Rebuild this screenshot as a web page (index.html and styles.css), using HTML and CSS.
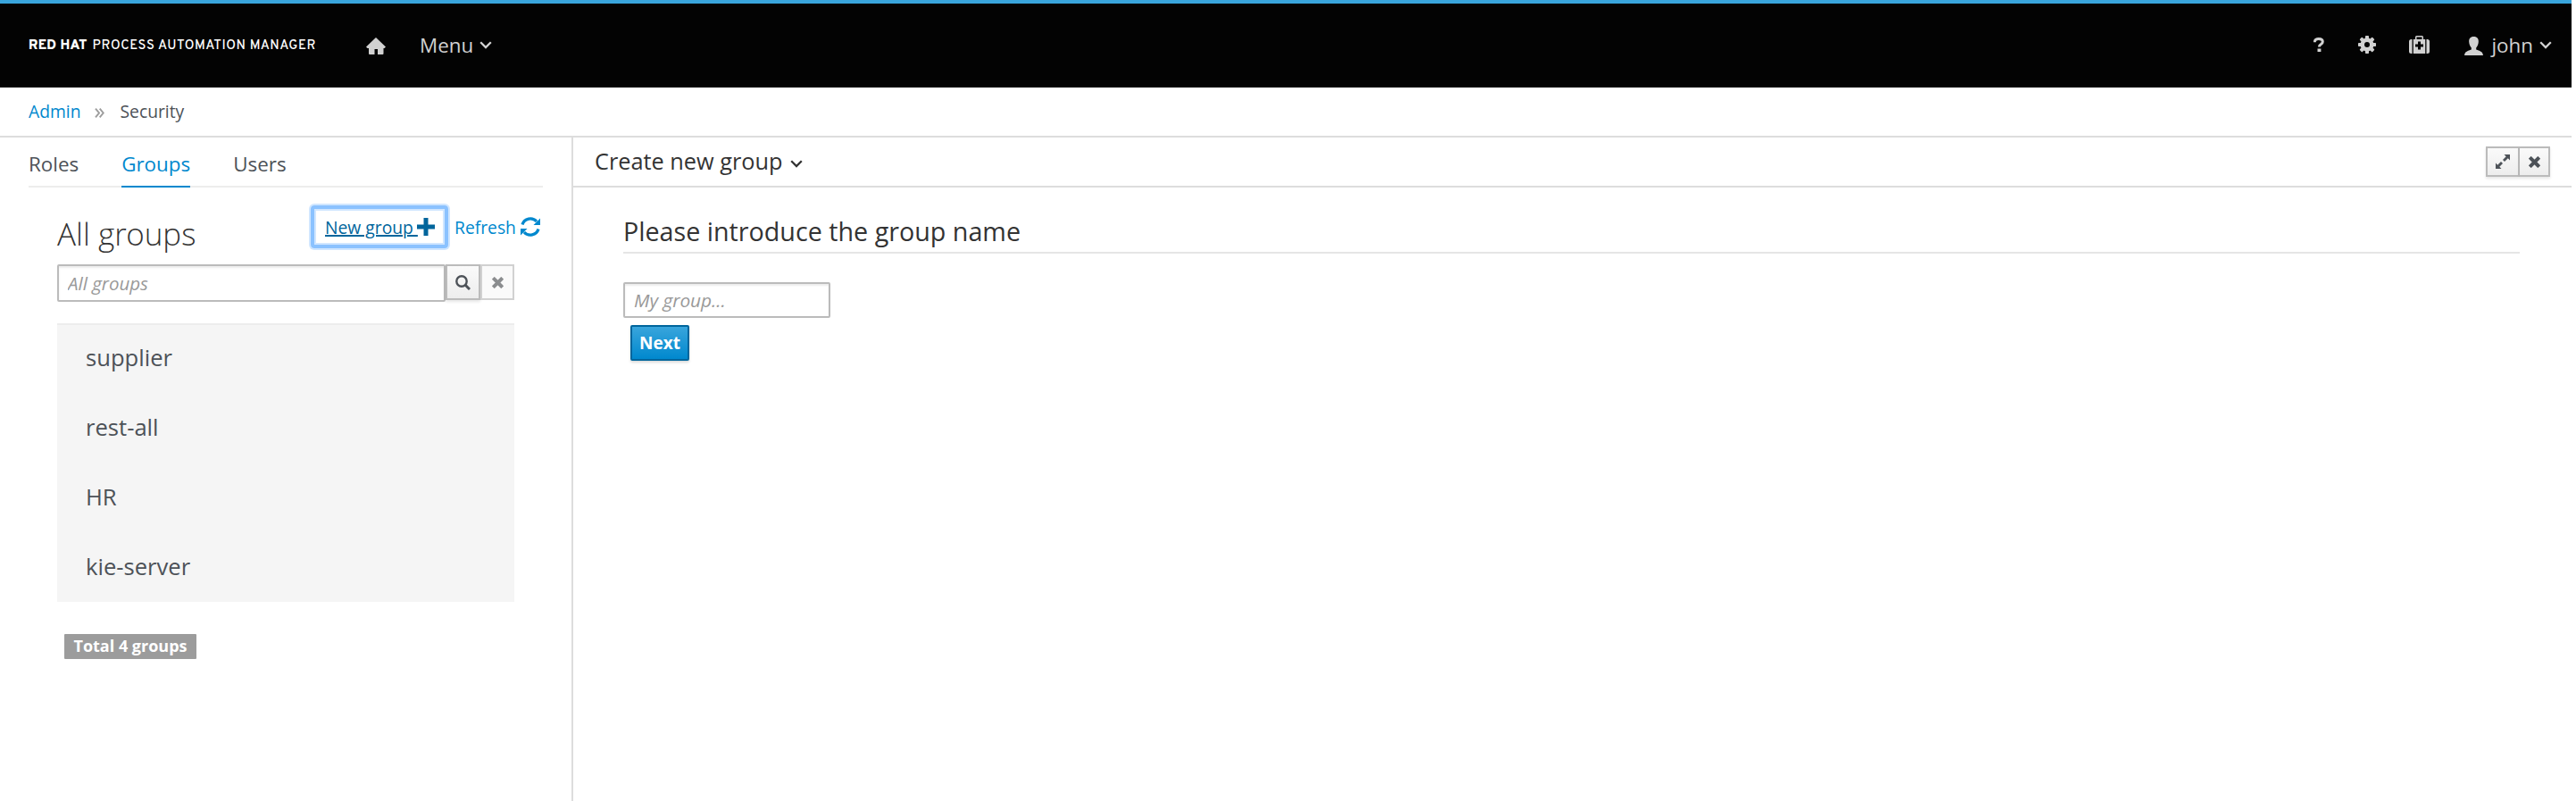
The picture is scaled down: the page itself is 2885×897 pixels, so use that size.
FILE: index.html
```html
<!DOCTYPE html>
<html lang="en">
<head>
<meta charset="utf-8">
<title>Red Hat Process Automation Manager</title>
<link rel="stylesheet" href="styles.css">
</head>
<body>
<svg class="defs" width="0" height="0">
  <symbol id="chevron" viewBox="0 0 14 9"><path d="M1.200 1.200 7 7l5.800-5.800" fill="none" stroke="currentColor" stroke-width="2.300"/></symbol>
  <symbol id="times" viewBox="0 0 12 12"><path d="M2.500 2.500 9.500 9.500M9.500 2.500 2.500 9.500" fill="none" stroke="currentColor" stroke-width="3.700" stroke-linecap="square"/></symbol>
</svg>
<div class="app">
  <header class="topbar">
    <div class="brand"><b>RED HAT</b><span class="brand-name">PROCESS AUTOMATION MANAGER</span></div>
    <svg class="home" viewBox="0 0 22 19"><path d="M11 0 22 10.500 20.500 12H19.500V18Q19.500 19 18.500 19H13V13H9.500V19H4Q3 19 3 18V12H1.500L0 10.500Z" fill="currentColor"/></svg>
    <div class="menu"><span>Menu</span><svg class="chev"><use href="#chevron"/></svg></div>
    <div class="tools">
      <svg class="help" viewBox="0 0 12 16"><path d="M1.300 5.200Q1.500 1.500 5.800 1.500Q10.300 1.500 10.300 4.800Q10.300 6.500 8.200 7.700Q6.400 8.700 6.400 10.500" fill="none" stroke="currentColor" stroke-width="3"/><rect x="4.500" y="12.500" width="3.900" height="3.500" fill="currentColor"/></svg>
      <svg class="gear" viewBox="0 0 20 20"><g fill="currentColor"><rect x="8" width="4" height="20" rx=".8"/><rect x="8" width="4" height="20" rx=".8" transform="rotate(45 10 10)"/><rect x="8" width="4" height="20" rx=".8" transform="rotate(90 10 10)"/><rect x="8" width="4" height="20" rx=".8" transform="rotate(135 10 10)"/><circle cx="10" cy="10" r="7.500"/></g><circle class="gear-hole" cx="10" cy="10" r="3"/></svg>
      <svg class="kit" viewBox="0 0 23 20"><path d="M3.500 4V20H2.500Q0 20 0 17.500V6.500Q0 4 2.500 4ZM19.500 4V20H20.500Q23 20 23 17.500V6.500Q23 4 20.500 4ZM4.800 20V4H7V1.500Q7 0 8.500 0H14.500Q16 0 16 1.500V4H18.200V20ZM8.500 4H14.500V1.500H8.500ZM10 6.500V9.500H7V12.500H10V15.500H13V12.500H16V9.500H13V6.500Z" fill="currentColor" fill-rule="evenodd"/></svg>
      <div class="user"><svg class="person" viewBox="0 0 21 21"><path d="M10.500 0C14.500 0 16 2.500 15.800 6C15.600 9 14.500 11 13.200 12.500V14.500C17 16 20.500 16.500 21 21H0C.5 16.500 4 16 7.800 14.500V12.500C6.500 11 5.400 9 5.200 6C5 2.500 6.500 0 10.500 0Z" fill="currentColor"/></svg><span>john</span><svg class="chev"><use href="#chevron"/></svg></div>
    </div>
  </header>
  <nav class="crumbs"><a>Admin</a><svg class="crumb-sep" viewBox="0 0 11 11"><path d="M1 .7 5 5.500 1 10.300M5.700 .7 9.700 5.500 5.700 10.300" fill="none" stroke="currentColor" stroke-width="1.900"/></svg><span>Security</span></nav>
  <div class="columns">
    <aside class="side">
      <div class="tabs"><span class="tab">Roles</span><span class="tab active">Groups</span><span class="tab">Users</span></div>
      <div class="side-head">
        <h1>All groups</h1>
        <a class="new-group"><span>New group </span><svg viewBox="0 0 20 20"><path d="M7.500 0H12.500V7.500H20V12.500H12.500V20H7.500V12.500H0V7.500H7.500Z" fill="currentColor"/></svg></a>
        <a class="refresh"><span>Refresh</span><svg viewBox="0 0 22 22"><path d="M2 8.500A9.400 9.400 0 0 1 18 5M20 13.500A9.400 9.400 0 0 1 4 17" fill="none" stroke="currentColor" stroke-width="3.300"/><path d="M22 1.500V9H14.500ZM0 20.500V13H7.500Z" fill="currentColor"/></svg></a>
      </div>
      <div class="search">
        <input type="text" placeholder="All groups">
        <button class="btn find"><svg viewBox="0 0 17 17"><circle cx="7" cy="7" r="5.700" fill="none" stroke="currentColor" stroke-width="2.400"/><path d="M11 11 16 16" stroke="currentColor" stroke-width="3"/></svg></button>
        <button class="btn clear"><svg class="times"><use href="#times"/></svg></button>
      </div>
      <ul class="groups"><li>supplier</li><li>rest-all</li><li>HR</li><li>kie-server</li></ul>
      <span class="total">Total 4 groups</span>
    </aside>
    <main class="main">
      <div class="panel-head">
        <div class="panel-title"><span>Create new group</span><svg class="chev"><use href="#chevron"/></svg></div>
        <div class="panel-tools">
          <button class="btn expand"><svg viewBox="0 0 16 16"><path d="M9.500 0H16V6.500L13.800 4.300 10 8 8 6 11.700 2.200ZM6.500 16H0V9.500L2.200 11.700 6 8 8 10 4.300 13.800Z" fill="currentColor"/></svg></button>
          <button class="btn close"><svg class="times"><use href="#times"/></svg></button>
        </div>
      </div>
      <section class="form">
        <h2>Please introduce the group name</h2>
        <input type="text" placeholder="My group...">
        <button class="next">Next</button>
      </section>
    </main>
  </div>
</div>
</body>
</html>
```
FILE: styles.css
```css
* { box-sizing: border-box; }
body { margin: 0; background: #fff; color: #4d5258; font: 20px/30px "Open Sans", sans-serif; overflow: hidden; }
svg { display: block; flex: none; }
.defs { position: absolute; }
h1, h2, ul { margin: 0; padding: 0; font-weight: 400; }
a { color: #0088ce; }
input, button { font: inherit; margin: 0; }
.app { width: 2880px; height: 897px; display: flex; flex-direction: column; }
.chev { width: 14px; height: 9px; }
.times { width: 13px; height: 13px; }

.topbar { height: 98px; flex: none; border-top: 4px solid #39a5dc; background: #030303; color: #d1d1d1; display: flex; align-items: center; padding: 0 22px 0 32px; font-size: 22.4px; }
.brand { width: 378px; color: #fff; font: 500 14.7px/20px "Overpass", "Roboto", sans-serif; letter-spacing: .6px; display: flex; gap: 6px; padding-top: 2px; }
.brand b { font-weight: 900; white-space: nowrap; letter-spacing: .3px; }
.brand-name { white-space: nowrap; }
.home { width: 22px; height: 19px; }
.menu { margin-left: 38px; display: flex; align-items: center; gap: 7px; }
.menu .chev, .user .chev { margin-top: -2px; }
.tools { margin-left: auto; display: flex; align-items: center; }
.help { width: 12px; height: 16px; margin-right: 38px; margin-bottom: 2px; }
.gear { width: 20px; height: 20px; margin-right: 37px; margin-bottom: 2px; }
.gear-hole { fill: #030303; }
.kit { width: 23px; height: 20px; margin-right: 39px; margin-bottom: 2px; }
.person { width: 21px; height: 21px; margin-right: 9px; }
.user { display: flex; align-items: center; }
.user .chev { margin-left: 7px; }

.crumbs { height: 56px; flex: none; border-bottom: 2px solid #ddd; padding-left: 32px; display: flex; align-items: center; font-size: 19.3px; }
.crumb-sep { width: 11px; height: 11px; margin: 2px 18px 0 15px; color: #9c9c9c; }

.columns { flex: 1; display: flex; min-height: 0; }
.side { width: 642px; border-right: 2px solid #ddd; padding-left: 32px; }
.tabs { width: 576px; height: 56px; border-bottom: 2px solid #ededec; display: flex; gap: 48px; font-size: 22.4px; line-height: 59px; }
.tab { height: 56px; }
.tab.active { color: #0088ce; border-bottom: 2px solid #0088ce; }
.side-head { height: 86px; padding-left: 32px; display: flex; align-items: flex-start; width: 576px; white-space: nowrap; font-size: 19.3px; }
h1 { font-family: "Open Sans Light", "Open Sans", sans-serif; font-size: 35px; line-height: 40px; font-weight: 300; color: #333; margin-top: 32px; width: 284px; flex: none; }
.new-group { width: 154px; height: 48px; flex: none; margin-top: 20px; border: 4px solid #8bc2ff; border-radius: 4px; box-shadow: 0 0 0 2px #d0e6ff, inset 0 0 0 2px #d0e6ff; color: #00659c; display: flex; align-items: center; padding-left: 12px; }
.new-group span { text-decoration: underline; text-decoration-thickness: 2px; white-space: pre; width: 103px; }
.new-group svg { width: 20px; height: 20px; }
.refresh { display: flex; align-items: center; gap: 5px; height: 48px; margin: 20px 0 0 7px; }
.new-group span, .refresh span { padding-top: 2px; }
.refresh svg { width: 22px; height: 22px; }
input { border: 2px solid #bbb; border-radius: 2px; padding: 0 10px; background: #fff; box-shadow: inset 0 2px 2px rgba(3,3,3,.075); outline: none; }
input::placeholder { color: #999; font-style: italic; opacity: 1; font-size: 20.5px; }
.search { display: flex; padding-left: 32px; }
.search input { width: 435px; height: 42px; }
.btn { height: 40px; border: 2px solid #bbb; background: linear-gradient(#fafafa, #ededed); color: #4d5258; padding: 0; display: flex; align-items: center; justify-content: center; box-shadow: 0 2px 3px rgba(3,3,3,.1); }
.find { width: 39px; }
.find svg { width: 17px; height: 17px; }
.clear { width: 38px; background: #fafafa; border-color: #d1d1d1; color: #8b8d8f; box-shadow: none; }
.groups { list-style: none; width: 512px; margin: 24px 0 0 32px; border-top: 2px solid #ededed; background: #f5f5f5; font-size: 25.6px; }
.groups li { height: 78px; padding-left: 32px; line-height: 74px; }
.groups li:last-child { height: 76px; }
.total { display: block; width: 148px; height: 28px; margin: 36px 0 0 40px; background: #9c9c9c; color: #fff; border-radius: 1px; font-size: 18px; font-weight: 700; line-height: 27px; text-align: center; }

.main { flex: 1; }
.panel-head { height: 56px; border-bottom: 2px solid #ddd; display: flex; justify-content: space-between; padding: 0 24px; color: #333; font-size: 25.3px; }
.panel-title { display: flex; align-items: center; gap: 8px; padding-bottom: 2px; }
.panel-title .chev { margin-top: 6px; }
.panel-tools { display: flex; margin-top: 10px; }
.panel-tools .btn { height: 34px; }
.expand { width: 38px; }
.expand svg { width: 16px; height: 16px; }
.close { width: 34px; border-left: 0; }
.form { padding: 30px 58px 30px 56px; }
h2 { height: 44px; border-bottom: 2px solid #e5e5e5; color: #333; font-size: 28.7px; line-height: 38px; }
.form input { display: block; width: 232px; height: 40px; margin-top: 32px; }
.form input::placeholder { font-size: 20.8px; }
.next { display: block; width: 66px; height: 40px; margin: 8px 0 0 8px; padding: 0; border: 2px solid #00659c; border-radius: 2px; background: linear-gradient(#39a5dc, #0088ce); color: #fff; font-size: 19px; font-weight: 700; box-shadow: 0 2px 3px rgba(3,3,3,.15); }
```
